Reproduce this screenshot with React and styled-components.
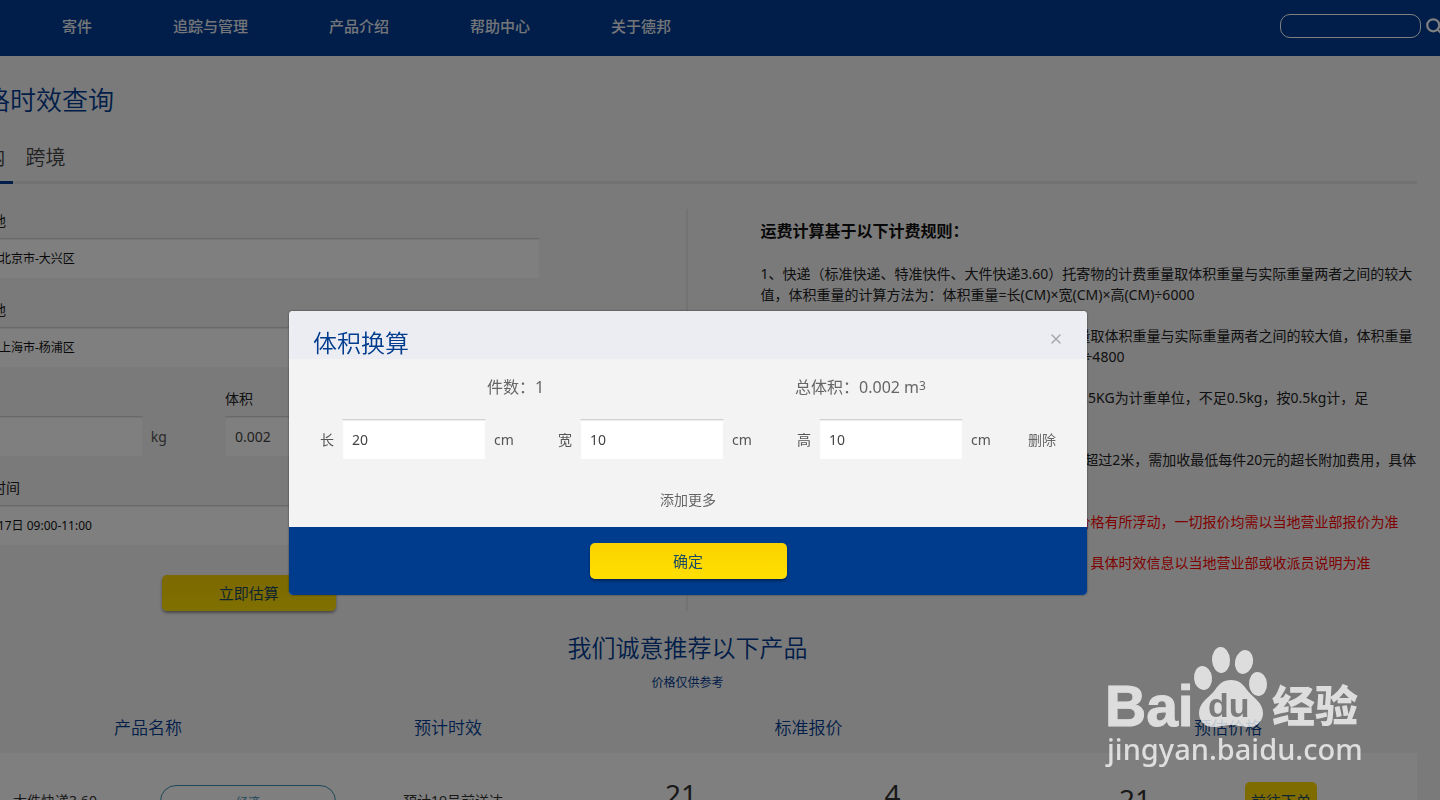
import React, { useState } from "react";
import styled, { createGlobalStyle } from "styled-components";
import { LuSearch, LuX } from "react-icons/lu";

const GlobalStyle = createGlobalStyle`
  * {
    box-sizing: border-box;
  }
  body {
    margin: 0;
    overflow: hidden;
    background: #f4f4f4;
    color: #222;
    font-family: "Noto Sans", "Noto Sans CJK SC", sans-serif;
    font-size: 14px;
  }
  button, input {
    font-family: inherit;
  }
`;

const navLinks = ["寄件", "追踪与管理", "产品介绍", "帮助中心", "关于德邦"];

const rules = [
  {
    lines: [
      "1、快递（标准快递、特准快件、大件快递3.60）托寄物的计费重量取体积重量与实际重量两者之间的较大",
      "值，体积重量的计算方法为：体积重量=长(CM)×宽(CM)×高(CM)÷6000",
    ],
  },
  {
    lines: [
      "2、零担件（精准卡航、精准汽运）托寄物的计费重量取体积重量与实际重量两者之间的较大值，体积重量",
      "的计算方法则为：体积重量=长(CM)×宽(CM)×高(CM)÷4800",
    ],
  },
  {
    lines: [
      "3、标准快递、特准快件、大件快递3.60的续重均以0.5KG为计重单位，不足0.5kg，按0.5kg计，足",
      "0.5kg但不足1kg，按1kg计",
    ],
  },
  {
    lines: [
      "4、大件快递3.60及零担托寄物1件货物最长边的长度超过2米，需加收最低每件20元的超长附加费用，具体",
      "以当地营业部说明为准",
    ],
  },
  {
    warn: true,
    lines: ["5、以上报价仅供参考，受燃油及淡旺季等因素影响价格有所浮动，一切报价均需以当地营业部报价为准"],
  },
  {
    warn: true,
    lines: ["6、以上时效仅供参考，受天气交通等因素影响波动，具体时效信息以当地营业部或收派员说明为准"],
  },
];

const dimensions = [
  { id: "length", name: "长", value: "20" },
  { id: "width", name: "宽", value: "10" },
  { id: "height", name: "高", value: "10" },
];

const Header = () => (
  <HeaderBar>
    <nav>
      {navLinks.map((name) => (
        <a key={name} href="#">
          {name}
        </a>
      ))}
    </nav>
    <Search>
      <input type="text" aria-label="搜索" />
      <button type="button" aria-label="搜索">
        <LuSearch size={18} strokeWidth={3} />
      </button>
    </Search>
  </HeaderBar>
);

const QueryForm = () => (
  <Form>
    <Field>
      <label htmlFor="from">始发地</label>
      <TextInput id="from" $indent={40} defaultValue="北京市-大兴区" />
    </Field>
    <Field>
      <label htmlFor="to">目的地</label>
      <TextInput id="to" $indent={40} defaultValue="上海市-杨浦区" />
    </Field>
    <FieldRow>
      <Field>
        <label htmlFor="weight">重量</label>
        <WithUnit>
          <TextInput id="weight" $indent={16} />
          <span>kg</span>
        </WithUnit>
      </Field>
      <Field $flush>
        <label htmlFor="volume">体积</label>
        <WithUnit>
          <TextInput id="volume" $indent={9} $large defaultValue="0.002" />
          <span>m³</span>
        </WithUnit>
      </Field>
    </FieldRow>
    <Field>
      <label htmlFor="time">寄件时间</label>
      <TextInput id="time" $indent={20} defaultValue="6月17日 09:00-11:00" />
    </Field>
    <YellowButton type="button" $width={174}>
      立即估算
    </YellowButton>
  </Form>
);

const Products = () => (
  <ProductSection>
    <h2>我们诚意推荐以下产品</h2>
    <p>价格仅供参考</p>
    <ProductTable>
      <colgroup>
        <Col $width={194} />
        <Col $width={186} />
        <Col $width={220} />
        <Col $width={246} />
        <Col />
        <Col $width={152} />
        <Col $width={206} />
      </colgroup>
      <thead>
        <tr>
          <th colSpan={2}>产品名称</th>
          <th>预计时效</th>
          <th colSpan={2}>标准报价</th>
          <th colSpan={2}>预估价格</th>
        </tr>
      </thead>
      <tbody>
        <tr>
          <td className="name">大件快递3.60</td>
          <td className="tag">
            <Tag>经济</Tag>
          </td>
          <td className="eta">预计19号前送达</td>
          <td className="price">
            <Price>21</Price>
          </td>
          <td className="price weight">
            <Price>4</Price>
          </td>
          <td className="total">
            <Price>21</Price>
          </td>
          <td className="action">
            <OrderButton type="button">前往下单</OrderButton>
          </td>
        </tr>
      </tbody>
    </ProductTable>
  </ProductSection>
);

const VolumeDialog = ({ onClose }) => (
  <Overlay>
    <Dialog role="dialog" aria-modal="true" aria-labelledby="dialog-title">
      <DialogHeader>
        <h2 id="dialog-title">体积换算</h2>
        <button type="button" aria-label="关闭" onClick={onClose}>
          <LuX size={16} strokeWidth={2} />
        </button>
      </DialogHeader>
      <DialogBody>
        <Totals>
          <span>件数：1</span>
          <span>
            总体积：0.002 m<sup>3</sup>
          </span>
        </Totals>
        <DimensionRow>
          {dimensions.map(({ id, name, value }) => (
            <Dimension key={id}>
              <label htmlFor={id}>{name}</label>
              <TextInput id={id} $indent={9} $large defaultValue={value} />
              <span>cm</span>
            </Dimension>
          ))}
          <TextButton type="button">删除</TextButton>
        </DimensionRow>
        <TextButton type="button">添加更多</TextButton>
      </DialogBody>
      <DialogFooter>
        <YellowButton type="button" $width={197} onClick={onClose}>
          确定
        </YellowButton>
      </DialogFooter>
    </Dialog>
  </Overlay>
);

const Watermark = () => (
  <Mark viewBox="0 0 270 132" width="270" height="132" aria-label="Baidu 经验">
    <g fill="white" opacity="0.75">
      <text x="5" y="86" fontSize="57" fontWeight="700" fontFamily="Liberation Sans" stroke="white">
        Bai
      </text>
      <ellipse cx="103" cy="38" rx="9" ry="12" transform="rotate(-6 103 38)" />
      <ellipse cx="121" cy="20" rx="9" ry="13" transform="rotate(-3 121 20)" />
      <ellipse cx="144" cy="22" rx="9" ry="12" transform="rotate(12 144 22)" />
      <ellipse cx="158" cy="44" rx="9" ry="12" transform="rotate(-4 158 44)" />
      <path d="M131 40c8 0 12 4 16 10 5 7 16 12 16 23 0 8-6 14-14 14-7 0-11-2-18-2s-11 2-18 2c-8 0-14-6-14-14 0-11 11-16 16-23 4-6 8-10 16-10z" />
      <text x="172" y="82" fontSize="43" fontWeight="900" fontFamily="Noto Sans CJK SC">
        经验
      </text>
      <text x="7" y="120" fontSize="29" fontWeight="500" fontFamily="Noto Sans">
        jingyan.baidu.com
      </text>
    </g>
    <text x="108" y="77" fontSize="34" fontWeight="700" fontFamily="Liberation Sans" fill="#7c7c7c">
      du
    </text>
  </Mark>
);

const App = () => {
  const [open, setOpen] = useState(true);

  return (
    <>
      <GlobalStyle />
      <Header />
      <Page>
        <h1>价格时效查询</h1>
        <Tabs>
          <Tab type="button" $active>
            国内
          </Tab>
          <Tab type="button">跨境</Tab>
        </Tabs>
        <Columns>
          <QueryForm />
          <Rules>
            <h3>运费计算基于以下计费规则：</h3>
            {rules.map(({ lines, warn }) => (
              <Rule key={lines[0]} $warn={warn}>
                {lines.map((line) => (
                  <span key={line}>{line}</span>
                ))}
              </Rule>
            ))}
          </Rules>
        </Columns>
        <Products />
      </Page>
      {open && <VolumeDialog onClose={() => setOpen(false)} />}
      <Watermark />
    </>
  );
};

const HeaderBar = styled.header`
  height: 56px;
  padding-left: 62px;
  display: flex;
  align-items: center;
  justify-content: space-between;
  overflow: hidden;
  background: #003c92;
  nav {
    display: flex;
    gap: 81px;
    padding-bottom: 5px;
    a {
      color: #e8ecf4;
      font-size: 15px;
      font-weight: 500;
      text-decoration: none;
      white-space: nowrap;
    }
  }
`;

const Search = styled.div`
  display: flex;
  align-items: center;
  gap: 4px;
  margin: 0 -3px 4px 0;
  input {
    width: 141px;
    height: 24px;
    padding: 0 10px;
    border: 1px solid white;
    border-radius: 10px;
    background: transparent;
    color: white;
  }
  button {
    display: flex;
    padding: 0;
    border: none;
    background: none;
    color: white;
  }
`;

const Page = styled.main`
  margin: 0 23px 0 -42px;
  h1 {
    margin: 0;
    padding-top: 24px;
    color: #003c92;
    font-size: 26px;
    font-weight: 350;
    line-height: 40px;
  }
`;

const Tabs = styled.div`
  display: flex;
  gap: 5px;
  margin-top: 13px;
  border-bottom: 3px solid #e6e6e9;
`;

const Tab = styled.button`
  width: 55px;
  height: 51px;
  margin-bottom: -3px;
  padding: 0 0 2px;
  border: none;
  border-bottom: 3px solid ${({ $active }) => ($active ? "#003c92" : "transparent")};
  background: none;
  color: #444;
  font-size: 20px;
  font-weight: 350;
  white-space: nowrap;
`;

const Columns = styled.div`
  display: grid;
  grid-template-columns: minmax(0, 1fr) minmax(0, 1fr);
  margin-top: 25px;
`;

const Form = styled.form`
  display: flex;
  flex-direction: column;
  padding-right: 146px;
  border-right: 2px solid #e6e6e9;
  > button {
    align-self: center;
    margin-top: 10px;
  }
`;

const Field = styled.div`
  display: flex;
  flex-direction: column;
  height: 89px;
  label {
    padding-left: ${({ $flush }) => ($flush ? 0 : 6)}px;
    line-height: 21px;
    padding-top: 1px;
    margin-bottom: 7px;
  }
`;

const FieldRow = styled.div`
  display: grid;
  grid-template-columns: 213px 262px;
  gap: 54px;
`;

const WithUnit = styled.div`
  display: flex;
  align-items: center;
  gap: 8px;
  color: #555;
  span {
    width: 24px;
  }
`;

const TextInput = styled.input`
  width: 100%;
  min-width: 0;
  height: 40px;
  padding: 0 9px 1px ${({ $indent }) => $indent}px;
  border: 1px solid #f4f4f4;
  border-top: 1px solid #d2d2d2;
  border-bottom: none;
  background: white;
  box-shadow: inset 0 1px 1px rgba(0, 0, 0, 0.08);
  color: ${({ $large }) => ($large ? "#444" : "#111")};
  font-size: ${({ $large }) => ($large ? 14 : 12)}px;
`;

const YellowButton = styled.button`
  width: ${({ $width }) => $width}px;
  height: 36px;
  padding: 0 0 2px;
  border: none;
  border-radius: 5px;
  background: linear-gradient(#fad200, #ffdf00);
  box-shadow: 0 2px 3px rgba(0, 0, 0, 0.4);
  color: #1c4a62;
  font-size: 15px;
  cursor: pointer;
`;

const Rules = styled.section`
  padding: 10px 0 18px 73px;
  h3 {
    margin: 0 0 20px;
    color: #111;
    font-size: 16px;
    font-weight: 700;
    line-height: 24px;
  }
`;

const Rule = styled.p`
  margin: 0 0 20px;
  color: ${({ $warn }) => ($warn ? "#f00" : "#222")};
  line-height: 21px;
  span {
    display: block;
    white-space: nowrap;
  }
`;

const ProductSection = styled.section`
  margin-top: 19px;
  color: #003c92;
  text-align: center;
  h2 {
    margin: 0;
    font-size: 24px;
    font-weight: 350;
    line-height: 36px;
  }
  p {
    margin: 8px 0 0;
    font-size: 12px;
    line-height: 18px;
  }
`;

const ProductTable = styled.table`
  width: 100%;
  table-layout: fixed;
  border-collapse: collapse;
  th {
    height: 61px;
    padding: 8px 0 0;
    font-size: 17px;
    font-weight: 350;
    &:last-child {
      padding-right: 20px;
    }
  }
  td {
    height: 98px;
    padding: 0;
    background: white;
    color: #333;
  }
  .name {
    padding-bottom: 4px;
  }
  .tag {
    padding: 2px 0 0 6px;
  }
  .eta {
    padding: 0 0 4px 10px;
  }
  .price {
    padding-bottom: 16px;
  }
  .weight {
    padding-right: 78px;
  }
  .total {
    padding-bottom: 6px;
  }
  .action {
    padding: 0 66px 2px 0;
  }
`;

const Col = styled.col`
  width: ${({ $width }) => ($width ? `${$width}px` : "auto")};
`;

const Tag = styled.span`
  display: block;
  width: 176px;
  height: 36px;
  margin: 0 auto;
  border: 1px solid #3d8fb5;
  border-radius: 16px;
  color: #3d8fb5;
  font-size: 12px;
  line-height: 34px;
`;

const Price = styled.span`
  font-size: 28px;
`;

const OrderButton = styled.button`
  width: 72px;
  height: 38px;
  padding: 0 0 2px;
  border: none;
  border-radius: 5px;
  background: #fcd800;
  color: #1c4a62;
  font-size: 15px;
`;

const Overlay = styled.div`
  position: fixed;
  inset: 0;
  display: flex;
  justify-content: center;
  align-items: flex-start;
  padding: 311px 64px 0 0;
  background: rgba(0, 0, 0, 0.5);
`;

const Dialog = styled.div`
  width: 798px;
  overflow: hidden;
  border-radius: 4px;
  background: #f3f3f3;
  box-shadow: 0 0 2px rgba(0, 0, 0, 0.6);
  color: #666;
`;

const DialogHeader = styled.div`
  display: flex;
  align-items: center;
  justify-content: space-between;
  height: 48px;
  padding: 8px 23px 0 24px;
  background: #ecedf3;
  h2 {
    margin: 0;
    padding-top: 8px;
    color: #003c8e;
    font-size: 24px;
    font-weight: 350;
    line-height: 32px;
  }
  button {
    display: flex;
    padding: 0;
    border: none;
    background: none;
    color: #a4a4a8;
    cursor: pointer;
  }
`;

const DialogBody = styled.div`
  display: flex;
  flex-direction: column;
  align-items: center;
  height: 168px;
  padding-top: 16px;
`;

const Totals = styled.div`
  display: grid;
  grid-template-columns: 1fr 1fr;
  width: 100%;
  padding: 0 54px;
  font-size: 16px;
  line-height: 24px;
  text-align: center;
  sup {
    font-size: 12px;
    line-height: 0;
    vertical-align: 3px;
  }
`;

const DimensionRow = styled.div`
  display: grid;
  grid-template-columns: 238px 239px 231px auto;
  align-items: center;
  width: 100%;
  margin: 20px 0 30px;
  padding-left: 31px;
`;

const Dimension = styled.div`
  display: flex;
  align-items: center;
  gap: 8px;
  color: #555;
  input {
    width: 144px;
  }
`;

const TextButton = styled.button`
  padding: 0;
  border: none;
  background: none;
  color: #666;
  font-size: 14px;
  line-height: 21px;
  text-align: left;
  cursor: pointer;
`;

const DialogFooter = styled.div`
  display: flex;
  align-items: center;
  justify-content: center;
  height: 68px;
  background: #003c8e;
`;

const Mark = styled.svg`
  position: fixed;
  right: 70px;
  bottom: 28px;
  pointer-events: none;
`;

export default App;
